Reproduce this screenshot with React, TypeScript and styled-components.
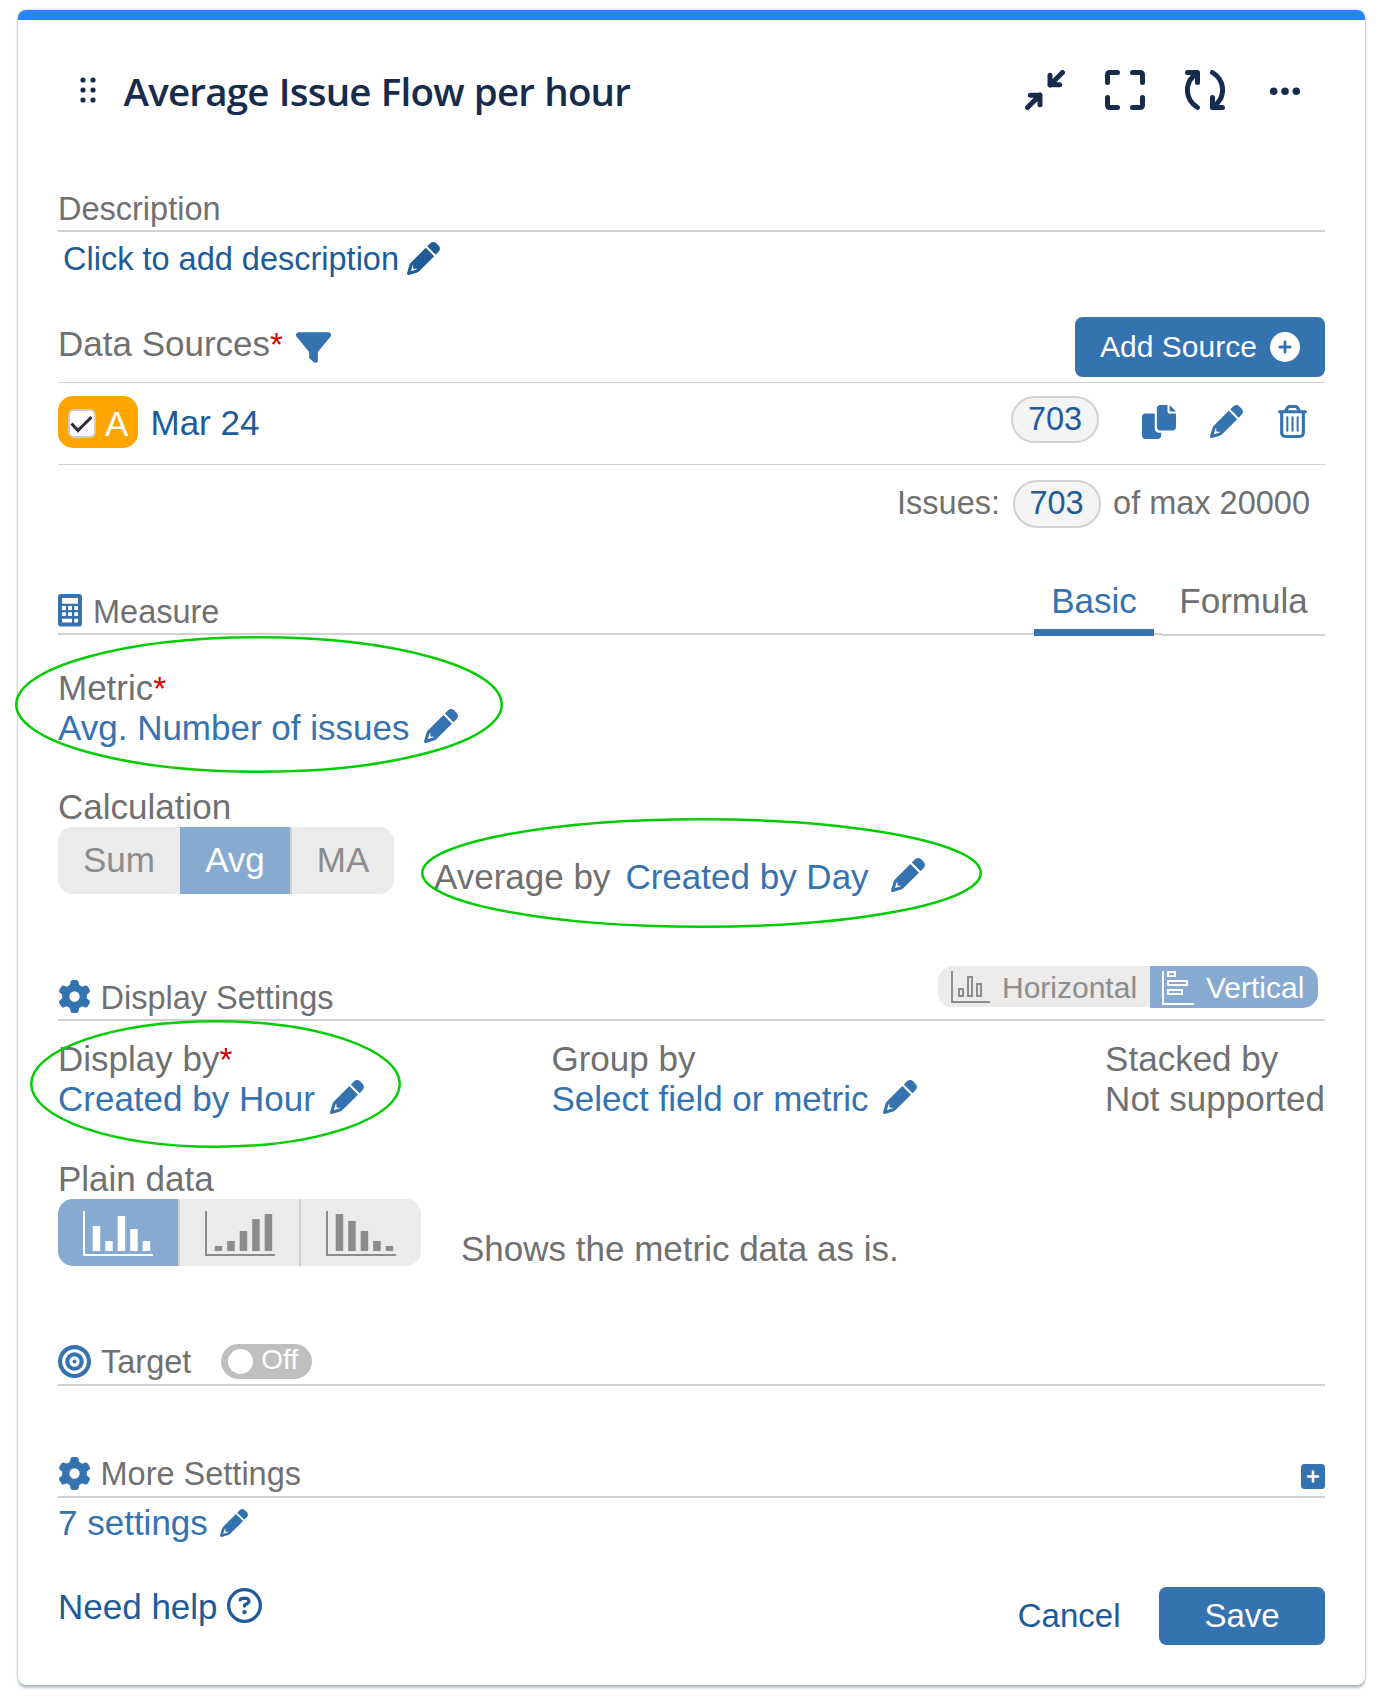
import React from "react";
import styled, { createGlobalStyle } from "styled-components";
import {
  FaBullseye,
  FaCirclePlus,
  FaFilter,
  FaGear,
  FaRegCircleQuestion,
  FaRegTrashCan,
} from "react-icons/fa6";

const color = {
  navy: "#172b4d",
  text: "#707070",
  link: "#205b99",
  blue: "#3572b0",
  activeBlue: "#87aad0",
  rule: "#d1d1d1",
  segment: "#ebebeb",
  segmentText: "#8c8c8c",
  required: "#d60000",
  ring: "#00cc00",
};

const GlobalStyle = createGlobalStyle`
  *, *::before, *::after { box-sizing: border-box; }
  body {
    margin: 0;
    background: #fff;
    font-family: "Liberation Sans", Arial, sans-serif;
  }
  svg { display: block; flex: none; }
`;

const Page = styled.div`
  position: relative;
  height: 1698px;
  padding: 10px 15px 0 18px;
  overflow: hidden;
`;

const Card = styled.main`
  height: 1675px;
  border-radius: 8px;
  overflow: hidden;
  background: #fff;
  box-shadow: 0 2.5px 2.5px rgba(9, 30, 66, 0.25), 0 0 2.5px rgba(9, 30, 66, 0.31);
`;

const AccentBar = styled.div`
  height: 10px;
  background: #2684ff;
`;

const CardBody = styled.div`
  padding: 30px 40px 0;
`;

const Header = styled.header`
  display: flex;
  align-items: center;
  height: 80px;
  padding: 0 20px 0 22px;
`;

const Title = styled.h1`
  flex: 1;
  margin: 2px 0 0 27.5px;
  font: 600 38.5px/50px "Open Sans", "Noto Sans", sans-serif;
  letter-spacing: -0.78px;
  word-spacing: 0.8px;
  white-space: nowrap;
  color: ${color.navy};
`;

const HeaderActions = styled.div`
  display: flex;
  gap: 40px;
`;

const SectionHead = styled.div<{ $top: number; $height?: number }>`
  display: flex;
  align-items: flex-end;
  height: ${(p) => p.$height ?? 44}px;
  margin-top: ${(p) => p.$top}px;
  padding-bottom: 1px;
  border-bottom: 2px solid ${color.rule};
  color: ${color.blue};
`;

const SectionTitle = styled.h2<{ $gap?: number; $bottom?: number }>`
  flex: 1;
  margin: 0 0 ${(p) => p.$bottom ?? 0}px ${(p) => p.$gap ?? 0}px;
  font-size: 32.5px;
  font-weight: 400;
  line-height: 40px;
  white-space: nowrap;
  color: ${color.text};
`;

const IconSlot = styled.span<{ $bottom?: number; $top?: number; $left?: number }>`
  display: block;
  margin: ${(p) => p.$top ?? 0}px 0 ${(p) => p.$bottom ?? 0}px ${(p) => p.$left ?? 0}px;
`;

const Label = styled.div`
  font-size: 35px;
  line-height: 40px;
  white-space: nowrap;
  color: ${color.text};
`;

const Required = styled.span`
  font-size: 33px;
  line-height: 1;
  color: ${color.required};
`;

const EditLink = styled.a<{ $small?: boolean; $dark?: boolean; $gap?: number }>`
  display: flex;
  align-items: flex-start;
  gap: ${(p) => p.$gap ?? 15}px;
  height: 40px;
  font-size: ${(p) => (p.$small ? 32.5 : 35)}px;
  line-height: 40px;
  white-space: nowrap;
  color: ${(p) => (p.$dark ? color.link : color.blue)};
`;

const DescriptionRow = styled.div`
  padding: 7px 0 0 5px;
`;

const SourcesHead = styled.div`
  display: flex;
  align-items: flex-start;
  height: 66px;
  margin-top: 38px;
  border-bottom: 1px solid ${color.rule};
  color: ${color.blue};
`;

const SourcesLabel = styled(Label)`
  margin-top: 7px;
`;

const PrimaryButton = styled.button<{ $width: number; $height: number; $size: number }>`
  display: flex;
  align-items: center;
  justify-content: center;
  gap: 13px;
  width: ${(p) => p.$width}px;
  height: ${(p) => p.$height}px;
  margin: 0;
  padding: 0;
  border: 0;
  border-radius: 7.5px;
  background: ${color.blue};
  color: #fff;
  font-family: inherit;
  font-size: ${(p) => p.$size}px;
`;

const Spacer = styled.span`
  flex: 1;
`;

const SourceRow = styled.div`
  display: flex;
  align-items: flex-start;
  height: 82px;
  padding: 13px 16px 0 0;
  border-bottom: 1px solid ${color.rule};
  color: ${color.blue};
`;

const SourceBadge = styled.div`
  display: flex;
  align-items: center;
  gap: 9px;
  width: 80px;
  height: 52px;
  padding: 3px 0 0 10px;
  border-radius: 15px;
  background: #ffa500;
  color: #fff;
  font-size: 35px;
  line-height: 40px;
`;

const Checkbox = styled.span`
  display: block;
  width: 28px;
  height: 29px;
  border: 2px solid #ccc;
  border-radius: 6px;
  background: #fff;
`;

const SourceName = styled.a`
  flex: 1;
  margin: 7px 0 0 12.5px;
  font-size: 35px;
  line-height: 40px;
  color: ${color.link};
`;

const CountPill = styled.span<{ $height: number }>`
  width: 88px;
  height: ${(p) => p.$height}px;
  border: 2px solid ${color.rule};
  border-radius: 24px;
  background: #f4f4f4;
  color: ${color.link};
  font-size: 32.5px;
  line-height: 43px;
  text-align: center;
`;

const RowActions = styled.div`
  display: flex;
  gap: 34px;
  margin: 9px 0 0 43px;
`;

const TotalsRow = styled.div`
  display: flex;
  align-items: flex-start;
  height: 126px;
  padding: 15px 15px 0 0;
  justify-content: flex-end;
  gap: 12.5px;
  font-size: 32.5px;
  line-height: 47px;
  color: ${color.text};
`;

const MeasureHead = styled.div`
  display: flex;
  align-items: flex-start;
  height: 45px;
`;

const MeasureTitle = styled.div`
  display: flex;
  flex: 1;
  align-items: flex-end;
  height: 44px;
  padding-bottom: 1px;
  border-bottom: 2px solid ${color.rule};
  color: ${color.blue};
`;

const Tab = styled.button<{ $active?: boolean; $width: number }>`
  display: flex;
  justify-content: center;
  width: ${(p) => p.$width}px;
  height: 60px;
  margin: -15px 0 0;
  padding: 5px 0 0;
  border: 0;
  border-bottom: ${(p) => (p.$active ? `7px solid ${color.blue}` : `2px solid ${color.rule}`)};
  background: none;
  color: ${(p) => (p.$active ? color.blue : color.text)};
  font: 35px/40px "Liberation Sans", Arial, sans-serif;
`;

const TabGap = styled.span`
  width: 8px;
  height: 44px;
  border-bottom: 2px solid ${color.rule};
`;

const Field = styled.div<{ $top?: number }>`
  margin-top: ${(p) => p.$top ?? 0}px;
`;

const FieldRow = styled.div`
  display: flex;
  align-items: flex-start;
`;

const SegmentGroup = styled.div`
  display: flex;
  height: 67px;
  border-radius: 15px;
  overflow: hidden;
  background: ${color.segment};
`;

const Segment = styled.button<{ $active?: boolean; $width: number; $divided?: boolean }>`
  display: flex;
  justify-content: center;
  width: ${(p) => p.$width}px;
  margin: 0;
  padding: 12px 0 0;
  border: 0;
  border-left: ${(p) => (p.$divided ? `2px solid ${color.rule}` : "0")};
  background: ${(p) => (p.$active ? color.activeBlue : color.segment)};
  color: ${(p) => (p.$active ? "#fff" : color.segmentText)};
  font: 35px/42px "Liberation Sans", Arial, sans-serif;
`;

const Aside = styled.div`
  display: flex;
  gap: 15px;
  margin: 30px 0 0 40px;
`;

const OrientationGroup = styled.div`
  display: flex;
  align-self: flex-start;
  height: 42px;
  margin-right: 7px;
  border-radius: 15px;
  overflow: hidden;
`;

const Orientation = styled.button<{ $active?: boolean; $width: number }>`
  display: flex;
  gap: 12px;
  width: ${(p) => p.$width}px;
  height: ${(p) => (p.$active ? 42 : 41)}px;
  margin: 0;
  padding: 5px 0 0 ${(p) => (p.$active ? 12 : 13)}px;
  border: 0;
  background: ${(p) => (p.$active ? color.activeBlue : color.segment)};
  color: ${(p) => (p.$active ? "#fff" : color.segmentText)};
  font: 30px/33px "Liberation Sans", Arial, sans-serif;
`;

const DisplayFields = styled.div`
  display: flex;
  justify-content: space-between;
  margin-top: 18px;
`;

const Switch = styled.span`
  display: flex;
  align-items: center;
  gap: 8px;
  width: 91px;
  height: 35px;
  margin: 0 auto 4.5px 30px;
  padding-left: 7px;
  border-radius: 17.5px;
  background: #bfbfbf;
  color: #fff;
  font-size: 28px;
  line-height: 30px;
`;

const Knob = styled.span`
  width: 25px;
  height: 25px;
  border-radius: 50%;
  background: #fff;
`;

const SwitchText = styled.span`
  margin-top: -2px;
`;

const TargetTitle = styled(SectionTitle)`
  flex: none;
`;

const Footer = styled.footer`
  display: flex;
  align-items: flex-start;
  margin-top: 44px;
`;

const CancelLink = styled.a`
  margin: 9px 38.5px 0 auto;
  font-size: 33px;
  line-height: 40px;
  color: ${color.link};
`;

const RingSvg = styled.svg<{ $x: number; $y: number }>`
  position: absolute;
  left: ${(p) => p.$x}px;
  top: ${(p) => p.$y}px;
  pointer-events: none;
`;

const Ring = ({ x, y, w, h }: { x: number; y: number; w: number; h: number }) => (
  <RingSvg $x={x} $y={y} width={w} height={h} fill="none" stroke={color.ring} strokeWidth="2.5">
    <ellipse cx={w / 2} cy={h / 2} rx={w / 2 - 1.25} ry={h / 2 - 1.25} />
  </RingSvg>
);

const DragHandle = () => (
  <svg width="16" height="26" viewBox="0 0 16 26" fill={color.navy}>
    {[3, 13].map((x) => [3, 13, 23].map((y) => <circle key={`${x}-${y}`} cx={x} cy={y} r="2.6" />))}
  </svg>
);

const stroke = {
  width: 40,
  height: 40,
  viewBox: "0 0 40 40",
  fill: "none",
  stroke: color.navy,
  strokeWidth: 5,
  strokeLinecap: "round" as const,
  strokeLinejoin: "round" as const,
};

const MinimizeIcon = () => (
  <svg {...stroke}>
    <path d="M37.5 2.5 25 15M25 5.3V14.7H34.6" />
    <path d="M2.5 37.5 15 25M5.4 25.3H15V34.7" />
  </svg>
);

const MaximizeIcon = () => (
  <svg {...stroke}>
    <path d="M2.5 12.5V5Q2.5 2.5 5 2.5H12.5M27.5 2.5H35Q37.5 2.5 37.5 5V12.5M37.5 27.5V35Q37.5 37.5 35 37.5H27.5M12.5 37.5H5Q2.5 37.5 2.5 35V27.5" />
  </svg>
);

const RefreshIcon = () => (
  <svg {...stroke}>
    <path d="M2.5 2.5H12.5V12.5M12.5 37.5C-.8 29-.8 12 11.5 3.5" />
    <path d="M37.5 37.5H27.5V27.5M27.5 2.5C40.8 11 40.8 28 28.5 36.5" />
  </svg>
);

const MoreIcon = () => (
  <svg width="40" height="40" viewBox="0 0 40 40" fill={color.navy}>
    <circle cx="8.7" cy="21.2" r="3.8" />
    <circle cx="20" cy="21.2" r="3.8" />
    <circle cx="31.3" cy="21.2" r="3.8" />
  </svg>
);

const PencilIcon = ({ size }: { size: number }) => (
  <svg width={size} height={size} viewBox="0 0 512 512" fill="currentColor">
    <path d="M421.7 220.3 188.5 453.4 154.600 419.500 158.100 416H112C103.200 416 96 408.800 96 400V353.900L92.500 357.400C87.800 362.200 84.300 368 82.400 374.400L59.400 452.600 137.600 429.600C143.100 427.700 149.800 424.200 154.600 419.500L188.500 453.400C178.100 463.800 165.200 471.500 151.100 475.600L30.800 511C22.400 513.500 13.200 511.200 7 504.100 .8 498.800-1.500 489.700 1 481.200L36.400 360.900C40.500 346.800 48.200 333.900 58.600 323.500L291.700 90.300 421.700 220.300zM492.700 58.700C517.700 83.700 517.700 124.300 492.700 149.300L444.300 197.700 314.300 67.700 362.700 19.300C387.700-5.700 428.300-5.700 453.300 19.300L492.700 58.700z" />
  </svg>
);

const CopyIcon = () => (
  <svg width="34" height="34" viewBox="0 0 512 512" fill="currentColor">
    <path d="M384 96V0H272c-26.5 0-48 21.500-48 48v288c0 26.500 21.500 48 48 48h192c26.500 0 48-21.500 48-48V128h-95.100C398.400 128 384 113.600 384 96zM416 0v96h96L416 0zM192 352V128H48c-26.500 0-48 21.500-48 48v288c0 26.500 21.500 48 48 48h192c26.500 0 48-21.500 48-48v-48h-32C220.700 416 192 387.300 192 352z" />
  </svg>
);

const CalculatorIcon = () => (
  <svg width="24" height="33" viewBox="0 0 24 33">
    <rect width="24" height="32.500" rx="3" fill="currentColor" />
    <path
      fill="#fff"
      d="M4 4H20V9.700H4ZM4 12H7.900V16H4ZM10 12H14V16H10ZM16.200 12H20V16H16.200ZM4 18.300H7.900V22H4ZM10 18.300H14V22H10ZM16.200 18.300H20V22H16.200ZM4 24.800H14V28.500H4ZM16.200 24.800H20V28.500H16.200Z"
    />
  </svg>
);

const SquarePlusIcon = () => (
  <svg width="24" height="25" viewBox="0 0 24 25">
    <rect width="24" height="25" rx="3.500" fill="currentColor" />
    <path d="M12 7.500V17.500M7 12.500H17" stroke="#fff" strokeWidth="2.600" strokeLinecap="round" />
  </svg>
);

const CheckMark = () => (
  <svg width="24" height="25" viewBox="0 0 24 25" fill="none" stroke="#2b2b3b" strokeWidth="3">
    <path d="M1.500 12.500 8 19.500 21.500 6" />
  </svg>
);

const BarsIcon = ({ bars }: { bars: number[] }) => (
  <svg width="70" height="45" viewBox="0 0 70 45" fill="currentColor">
    <path d="M0 0H2V43H70V45H0Z" />
    {bars.map((h, i) => (
      <rect key={i} x={9.7 + i * 12.5} y={40 - h} width="7.500" height={h} />
    ))}
  </svg>
);

const ColumnsOutline = () => (
  <svg width="39" height="32" viewBox="0 0 39 32" fill="none" stroke="currentColor" strokeWidth="2">
    <path d="M1 0V31H39" />
    <path d="M8 18H12V25H8ZM17 6H21V25H17ZM26 13H30V25H26Z" />
  </svg>
);

const RowsOutline = () => (
  <svg width="32" height="34" viewBox="0 0 32 34" fill="none" stroke="currentColor" strokeWidth="2">
    <path d="M1 0V33H32" />
    <path d="M6 1H13V5H6ZM6 10H25V14H6ZM6 19H20V23H6Z" />
  </svg>
);

const Pencil = ({ top = 1, size = 34 }: { top?: number; size?: number }) => (
  <IconSlot $top={top}>
    <PencilIcon size={size} />
  </IconSlot>
);

export default function App() {
  return (
    <Page>
      <GlobalStyle />
      <Card>
        <AccentBar />
        <CardBody>
          <Header>
            <DragHandle />
            <Title>Average Issue Flow per hour</Title>
            <HeaderActions>
              <MinimizeIcon />
              <MaximizeIcon />
              <RefreshIcon />
              <MoreIcon />
            </HeaderActions>
          </Header>

          <SectionHead $top={58}>
            <SectionTitle>Description</SectionTitle>
          </SectionHead>
          <DescriptionRow>
            <EditLink $small $dark $gap={8}>
              Click to add description
              <Pencil top={3} size={33} />
            </EditLink>
          </DescriptionRow>

          <SourcesHead>
            <SourcesLabel>
              Data Sources<Required>*</Required>
            </SourcesLabel>
            <IconSlot $top={13} $left={13}>
              <FaFilter size={35} />
            </IconSlot>
            <Spacer />
            <PrimaryButton $width={250} $height={60} $size={30}>
              Add Source
              <FaCirclePlus size={30} />
            </PrimaryButton>
          </SourcesHead>
          <SourceRow>
            <SourceBadge>
              <Checkbox>
                <CheckMark />
              </Checkbox>
              A
            </SourceBadge>
            <SourceName>Mar 24</SourceName>
            <CountPill $height={47}>703</CountPill>
            <RowActions>
              <CopyIcon />
              <PencilIcon size={33} />
              <IconSlot $left={-1}>
                <FaRegTrashCan size={33} />
              </IconSlot>
            </RowActions>
          </SourceRow>
          <TotalsRow>
            <span>Issues:</span>
            <CountPill $height={48}>703</CountPill>
            <span>of max 20000</span>
          </TotalsRow>

          <MeasureHead>
            <MeasureTitle>
              <IconSlot $bottom={5}>
                <CalculatorIcon />
              </IconSlot>
              <SectionTitle $gap={11}>Measure</SectionTitle>
            </MeasureTitle>
            <Tab $active $width={120}>
              Basic
            </Tab>
            <TabGap />
            <Tab $width={163}>Formula</Tab>
          </MeasureHead>

          <Field $top={32}>
            <Label>
              Metric<Required>*</Required>
            </Label>
            <EditLink>
              Avg. Number of issues
              <Pencil />
            </EditLink>
          </Field>

          <Field $top={39}>
            <Label>Calculation</Label>
            <FieldRow>
              <SegmentGroup>
                <Segment $width={122}>Sum</Segment>
                <Segment $width={110} $active>
                  Avg
                </Segment>
                <Segment $width={104} $divided>
                  MA
                </Segment>
              </SegmentGroup>
              <Aside>
                <Label>Average by</Label>
                <EditLink $gap={22}>
                  Created by Day
                  <Pencil />
                </EditLink>
              </Aside>
            </FieldRow>
          </Field>

          <SectionHead $top={69} $height={55}>
            <IconSlot $bottom={5}>
              <FaGear size={33} />
            </IconSlot>
            <SectionTitle $gap={9.5}>Display Settings</SectionTitle>
            <OrientationGroup>
              <Orientation $width={212}>
                <ColumnsOutline />
                Horizontal
              </Orientation>
              <Orientation $active $width={168}>
                <RowsOutline />
                Vertical
              </Orientation>
            </OrientationGroup>
          </SectionHead>
          <DisplayFields>
            <Field>
              <Label>
                Display by<Required>*</Required>
              </Label>
              <EditLink>
                Created by Hour
                <Pencil />
              </EditLink>
            </Field>
            <Field>
              <Label>Group by</Label>
              <EditLink>
                Select field or metric
                <Pencil />
              </EditLink>
            </Field>
            <Field>
              <Label>Stacked by</Label>
              <Label>Not supported</Label>
            </Field>
          </DisplayFields>

          <Field $top={40}>
            <Label>Plain data</Label>
            <FieldRow>
              <SegmentGroup>
                <Segment $width={120} $active>
                  <BarsIcon bars={[25, 10, 35, 22, 10]} />
                </Segment>
                <Segment $width={121} $divided>
                  <BarsIcon bars={[5, 10, 20, 32, 37]} />
                </Segment>
                <Segment $width={122} $divided>
                  <BarsIcon bars={[37, 30, 20, 10, 5]} />
                </Segment>
              </SegmentGroup>
              <Aside>
                <Label>Shows the metric data as is.</Label>
              </Aside>
            </FieldRow>
          </Field>

          <SectionHead $top={73}>
            <IconSlot $bottom={5}>
              <FaBullseye size={33} />
            </IconSlot>
            <TargetTitle $gap={10} $bottom={1}>
              Target
            </TargetTitle>
            <Switch>
              <Knob />
              <SwitchText>Off</SwitchText>
            </Switch>
          </SectionHead>

          <SectionHead $top={68}>
            <IconSlot $bottom={5}>
              <FaGear size={33} />
            </IconSlot>
            <SectionTitle $gap={9.5} $bottom={1}>
              More Settings
            </SectionTitle>
            <IconSlot $bottom={6}>
              <SquarePlusIcon />
            </IconSlot>
          </SectionHead>
          <Field $top={5}>
            <EditLink $gap={12}>
              7 settings
              <Pencil top={6} size={28} />
            </EditLink>
          </Field>

          <Footer>
            <EditLink $dark $gap={9}>
              Need help
              <IconSlot $top={1}>
                <FaRegCircleQuestion size={35} />
              </IconSlot>
            </EditLink>
            <CancelLink>Cancel</CancelLink>
            <PrimaryButton $width={166} $height={58} $size={33}>
              Save
            </PrimaryButton>
          </Footer>
        </CardBody>
      </Card>
      <Ring x={15} y={636} w={488} h={137} />
      <Ring x={420.5} y={818} w={561} h={110} />
      <Ring x={30} y={1020} w={371} h={128} />
    </Page>
  );
}
